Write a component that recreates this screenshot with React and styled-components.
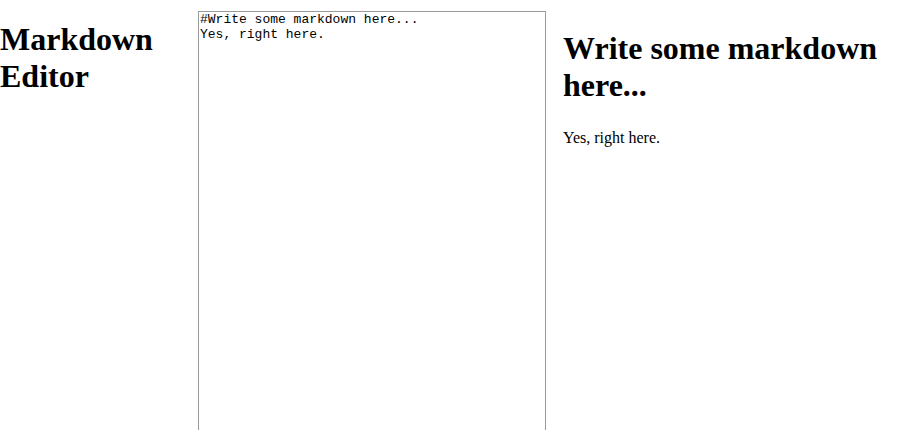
import React, { useState } from "react";
import styled, { createGlobalStyle } from "styled-components";

const GlobalStyle = createGlobalStyle`
  html, body {
    margin: 0;
    padding: 0;
    background: #ffffff;
    overflow: hidden;
  }
  body {
    font-family: "Liberation Serif", "Times New Roman", serif;
    color: #000000;
  }
`;

// styled component
const Wrapper = styled.div`
  width: 100%;
  height: 430px;
  overflow: hidden;
  display: flex;
  align-items: flex-start;
`;

const SideSection = styled.section`
  width: 198px;
  flex-shrink: 0;
`;

const Title = styled.h1`
  font-size: 32px;
  font-weight: bold;
  line-height: 37px;
  margin: ${(props) => props.margin || "21px 0"};
`;

const EditorSection = styled.section`
  width: 348px;
  flex-shrink: 0;
  padding-top: 11px;
`;

const Editor = styled.textarea`
  display: block;
  width: 100%;
  height: 440px;
  box-sizing: border-box;
  margin: 0;
  padding: 1px 1px;
  border: 1px solid #9a9a9a;
  font-family: "Liberation Mono", "Courier New", monospace;
  font-size: 13px;
  line-height: 14.7px;
  color: #000000;
  resize: none;
  overflow: hidden;
  outline: none;
`;

const PreviewSection = styled.section`
  flex: 1;
  padding-left: 17px;
  padding-right: 30px;
`;

const Paragraph = styled.p`
  font-size: 16px;
  margin: 0;
`;

const App = () => {
  const [text, setText] = useState("#Write some markdown here...\nYes, right here.");

  return (
    <>
      <GlobalStyle />
      <Wrapper>
        <SideSection>
          <Title>
            Markdown
            <br />
            Editor
          </Title>
        </SideSection>
        <EditorSection>
          <Editor value={text} onChange={(e) => setText(e.target.value)} spellCheck={false} />
        </EditorSection>
        <PreviewSection>
          <Title margin={"30px 0 25px"}>Write some markdown here...</Title>
          <Paragraph>Yes, right here.</Paragraph>
        </PreviewSection>
      </Wrapper>
    </>
  );
};

export default App;
